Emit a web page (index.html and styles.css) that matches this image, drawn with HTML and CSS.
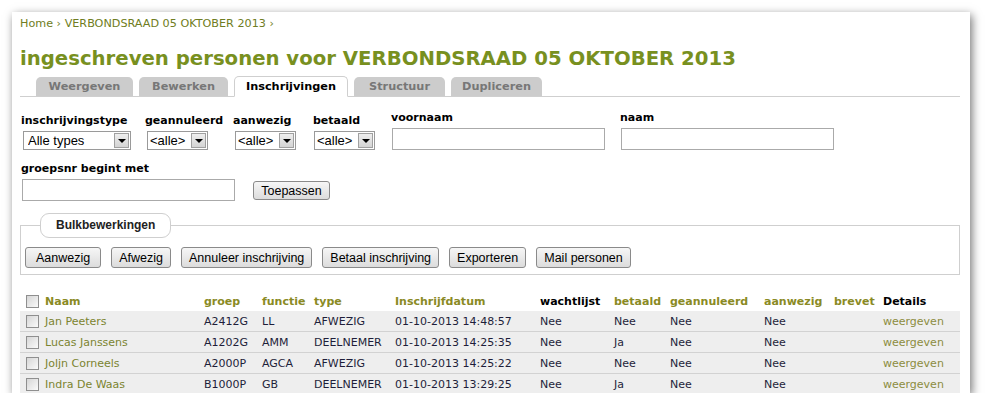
FILE: index.html
```html
<!DOCTYPE html>
<html lang="nl">
<head>
    <meta charset="UTF-8">
    <title>ingeschreven personen</title>
    <link rel="stylesheet" href="styles.css">
</head>
<body>
    <div class="window">
        <div class="breadcrumb"><a href="#">Home</a> › <a href="#">VERBONDSRAAD 05 OKTOBER 2013</a> ›</div>
        <h1>ingeschreven personen voor VERBONDSRAAD 05 OKTOBER 2013</h1>

        <ul class="tabs">
            <li class="tab tab-weergeven">Weergeven</li>
            <li class="tab tab-bewerken">Bewerken</li>
            <li class="tab tab-active">Inschrijvingen</li>
            <li class="tab tab-structuur">Structuur</li>
            <li class="tab tab-dupliceren">Dupliceren</li>
        </ul>

        <form class="filters">
            <div class="filter-row">
                <div class="field f-type">
                    <label>inschrijvingstype</label>
                    <span class="select s-type"><select><option>Alle types</option></select><span class="arrow"></span></span>
                </div>
                <div class="field f-geann">
                    <label>geannuleerd</label>
                    <span class="select s-small"><select><option>&lt;alle&gt;</option></select><span class="arrow"></span></span>
                </div>
                <div class="field f-aanw">
                    <label>aanwezig</label>
                    <span class="select s-small"><select><option>&lt;alle&gt;</option></select><span class="arrow"></span></span>
                </div>
                <div class="field f-betaald">
                    <label>betaald</label>
                    <span class="select s-small"><select><option>&lt;alle&gt;</option></select><span class="arrow"></span></span>
                </div>
                <div class="field f-voornaam">
                    <label>voornaam</label>
                    <input type="text" class="text-input">
                </div>
                <div class="field f-naam">
                    <label>naam</label>
                    <input type="text" class="text-input">
                </div>
            </div>
            <div class="filter-row row-2">
                <div class="field f-groep">
                    <label>groepsnr begint met</label>
                    <input type="text" class="text-input">
                </div>
                <button type="button" class="btn btn-apply">Toepassen</button>
            </div>
        </form>

        <fieldset class="bulk">
            <legend>Bulkbewerkingen</legend>
            <div class="bulk-actions">
                <button type="button" class="btn btn-wide">Aanwezig</button>
                <button type="button" class="btn">Afwezig</button>
                <button type="button" class="btn">Annuleer inschrijving</button>
                <button type="button" class="btn">Betaal inschrijving</button>
                <button type="button" class="btn">Exporteren</button>
                <button type="button" class="btn">Mail personen</button>
            </div>
        </fieldset>

        <table class="people">
            <colgroup>
                <col style="width:23px"><col style="width:159px"><col style="width:58px"><col style="width:52px">
                <col style="width:81px"><col style="width:145px"><col style="width:74px"><col style="width:56px">
                <col style="width:94px"><col style="width:70px"><col style="width:49px"><col style="width:79px">
            </colgroup>
            <thead>
                <tr>
                    <th><input type="checkbox" class="check"></th>
                    <th><a href="#">Naam</a></th>
                    <th><a href="#">groep</a></th>
                    <th><a href="#">functie</a></th>
                    <th><a href="#">type</a></th>
                    <th><a href="#">Inschrijfdatum</a></th>
                    <th>wachtlijst</th>
                    <th><a href="#">betaald</a></th>
                    <th><a href="#">geannuleerd</a></th>
                    <th><a href="#">aanwezig</a></th>
                    <th><a href="#">brevet</a></th>
                    <th>Details</th>
                </tr>
            </thead>
            <tbody>
                <tr>
                    <td><input type="checkbox" class="check"></td>
                    <td><a href="#">Jan Peeters</a></td>
                    <td>A2412G</td><td>LL</td><td>AFWEZIG</td><td>01-10-2013 14:48:57</td>
                    <td>Nee</td><td>Nee</td><td>Nee</td><td>Nee</td><td></td>
                    <td><a href="#" class="details">weergeven</a></td>
                </tr>
                <tr>
                    <td><input type="checkbox" class="check"></td>
                    <td><a href="#">Lucas Janssens</a></td>
                    <td>A1202G</td><td>AMM</td><td>DEELNEMER</td><td>01-10-2013 14:25:35</td>
                    <td>Nee</td><td>Ja</td><td>Nee</td><td>Nee</td><td></td>
                    <td><a href="#" class="details">weergeven</a></td>
                </tr>
                <tr>
                    <td><input type="checkbox" class="check"></td>
                    <td><a href="#">Joljn Corneels</a></td>
                    <td>A2000P</td><td>AGCA</td><td>AFWEZIG</td><td>01-10-2013 14:25:22</td>
                    <td>Nee</td><td>Nee</td><td>Nee</td><td>Nee</td><td></td>
                    <td><a href="#" class="details">weergeven</a></td>
                </tr>
                <tr>
                    <td><input type="checkbox" class="check"></td>
                    <td><a href="#">Indra De Waas</a></td>
                    <td>B1000P</td><td>GB</td><td>DEELNEMER</td><td>01-10-2013 13:29:25</td>
                    <td>Nee</td><td>Ja</td><td>Nee</td><td>Nee</td><td></td>
                    <td><a href="#" class="details">weergeven</a></td>
                </tr>
            </tbody>
        </table>
    </div>
</body>
</html>
```

FILE: styles.css
```css
body {
    margin: 0;
    background: #fff;
    font-family: "DejaVu Sans", Verdana, sans-serif;
    font-size: 11px;
    color: #222;
}
a {
    color: #7e8a2a;
    text-decoration: none;
}
.window {
    margin: 12px 0 0 12px;
    width: 940px;
    height: 381px;
    padding: 0 10px 0 8px;
    background: #fff;
    overflow: hidden;
    box-shadow: 2px 3px 9px rgba(0,0,0,0.55);
}
.breadcrumb {
    margin-top: 4px;
    line-height: 16px;
    font-size: 11.2px;
    color: #6f7d22;
}
.breadcrumb a {
    color: #6f7d22;
}
h1 {
    margin: 14px 0 0;
    font-size: 19.7px;
    line-height: 26px;
    color: #78901f;
}
.tabs {
    display: flex;
    margin: 5px 0 0;
    padding: 0 0 0 16px;
    list-style: none;
    border-bottom: 1px solid #cfcfcf;
    height: 19px;
}
.tab {
    height: 19px;
    margin-right: 6px;
    background: #cccccc;
    border-radius: 5px 5px 0 0;
    color: #777;
    font-weight: bold;
    font-size: 11.3px;
    line-height: 20px;
    text-align: center;
}
.tab-weergeven { width: 97px; }
.tab-bewerken { width: 89px; }
.tab-structuur { width: 91px; }
.tab-dupliceren { width: 91px; }
.tab-active {
    width: 112px;
    height: 19px;
    margin-top: -1px;
    background: #fff;
    border: 1px solid #cfcfcf;
    border-bottom: 1px solid #fff;
    color: #000;
}
.filters {
    margin-top: 14px;
}
.filter-row {
    display: flex;
    align-items: flex-end;
}
.field label {
    display: block;
    margin-left: 1px;
    font-weight: bold;
    font-size: 11px;
    line-height: 14px;
    color: #000;
}
.f-type { width: 124px; }
.f-geann { width: 88px; }
.f-aanw { width: 80px; }
.f-betaald { width: 78px; }
.f-voornaam { width: 229px; }
.select {
    display: inline-flex;
    margin: 3px 0 0 3px;
    height: 17px;
    border: 1px solid #9a9a9a;
    background: #fff;
}
.f-betaald .select { margin-left: 2px; }
.select select {
    appearance: none;
    border: none;
    outline: none;
    padding: 0 0 0 4px;
    background: #fff;
    font-family: "Liberation Sans", Arial, sans-serif;
    font-size: 13px;
    color: #000;
}
.s-type select { width: 90px; }
.s-small select { width: 43px; padding-left: 2px; }
.arrow {
    width: 15px;
    height: 15px;
    margin: 1px 1px 0 0;
    background: linear-gradient(#eee, #d4d4d4);
    border: 1px solid #a0a0a0;
    box-sizing: border-box;
    display: flex;
    align-items: center;
    justify-content: center;
}
.arrow::after {
    content: "";
    border-left: 4px solid transparent;
    border-right: 4px solid transparent;
    border-top: 4px solid #000;
    margin-top: 1px;
}
.text-input {
    display: block;
    margin: 3px 0 0 2px;
    width: 213px;
    height: 22px;
    box-sizing: border-box;
    border: 1px solid #aaa;
    padding: 0 3px;
}
.row-2 {
    margin-top: 12px;
}
.btn {
    height: 21px;
    padding: 0 7px;
    border: 1px solid #8a8a8a;
    border-radius: 3px;
    background: linear-gradient(#f6f6f6, #dcdcdc);
    font-family: "Liberation Sans", Arial, sans-serif;
    font-size: 12.5px;
    color: #000;
}
.btn-apply {
    margin: 0 0 1px 18px;
    width: 77px;
    height: 19px;
}
.bulk {
    margin: 12px 0 0;
    padding: 9px 4px 6px;
    border: 1px solid #cfcfcf;
}
.bulk legend {
    margin-left: 15px;
    padding: 0 15px;
    height: 25px;
    box-sizing: border-box;
    border: 1px solid #cfcfcf;
    border-radius: 9px;
    font-family: "Liberation Sans", Arial, sans-serif;
    font-weight: bold;
    font-size: 12px;
    line-height: 23px;
}
.bulk-actions {
    display: flex;
    gap: 10px;
}
.bulk-actions .btn-wide {
    padding: 0 10px;
}
.people {
    margin-top: 16px;
    width: 940px;
    table-layout: fixed;
    border-collapse: collapse;
}
.people th {
    height: 20px;
    padding: 0 2px;
    text-align: left;
    font-size: 11px;
    font-weight: bold;
    color: #000;
    white-space: nowrap;
}
.people th a {
    color: #8a8a24;
}
.people td {
    height: 20px;
    padding: 0 2px;
    background: #eeeeee;
    border-bottom: 1px solid #d2d2d2;
    white-space: nowrap;
    color: #1e1e3a;
}
.people td a {
    color: #7c8430;
}
.people td a.details {
    color: #8c8c40;
}
.check {
    appearance: none;
    display: block;
    margin: 0 0 0 4px;
    width: 13px;
    height: 13px;
    border: 1px solid #8f8f8f;
    background: linear-gradient(135deg, #d6d6d6, #fafafa);
}
```
